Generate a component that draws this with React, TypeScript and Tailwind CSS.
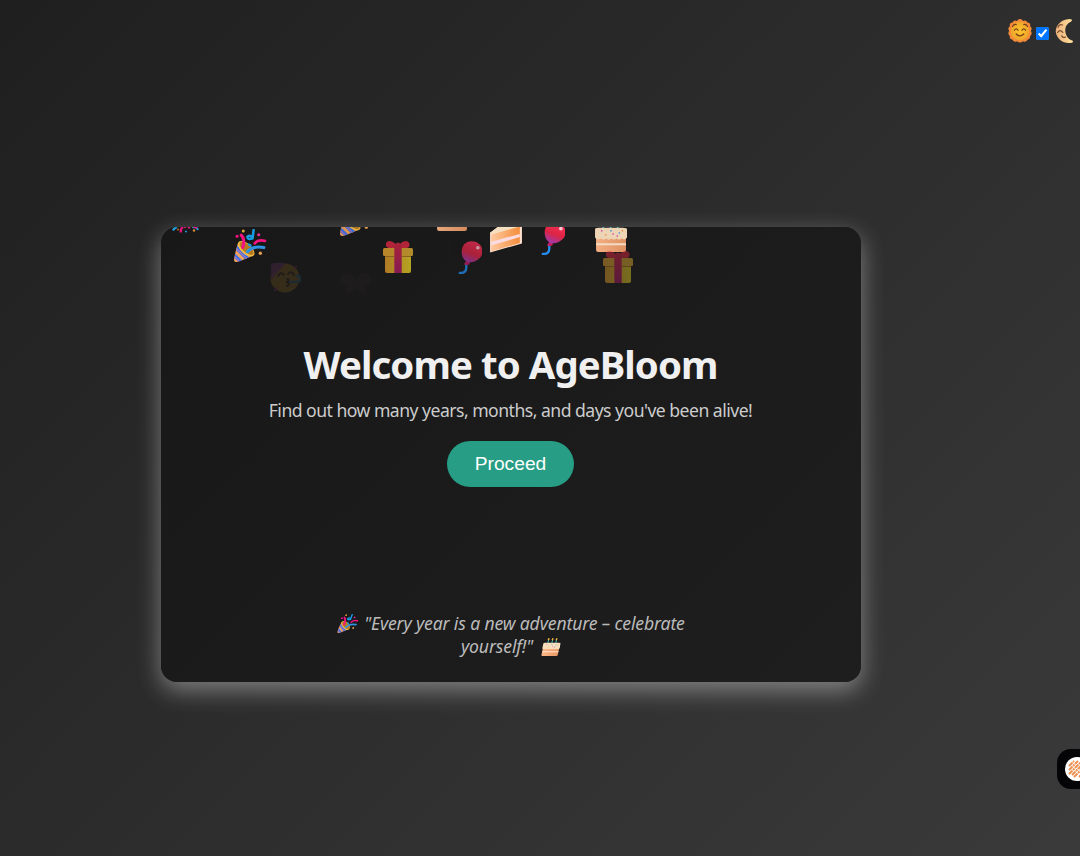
import type { ReactNode } from "react";

type GlyphProps = { className?: string };

function Glyph({ className = "", children }: GlyphProps & { children: ReactNode }) {
  return (
    <svg viewBox="0 0 32 32" fill="none" className={className} aria-hidden="true">
      {children}
    </svg>
  );
}

function Popper({ className }: GlyphProps) {
  return (
    <Glyph className={className}>
      <path d="M4 13Q1 22 0 30Q0 32 3 32Q13 29 19 25Z" fill="#f2a05a" />
      <path d="M3.4 16L14.5 27.5L10.5 29L2.2 20.5ZM1.3 24L7.8 30.4L4 31.6L0.5 28Z" fill="#3d73ef" />
      <path d="M2.6 19L12 28.5M0.9 27L5 31" stroke="#e06fa0" strokeWidth="0.9" />
      <ellipse cx="11.8" cy="19.2" rx="9.8" ry="5" transform="rotate(42 11.8 19.2)" fill="#f5bd45" />
      <ellipse cx="12.2" cy="18.8" rx="8.5" ry="3.8" transform="rotate(42 12.2 18.8)" fill="#b97a1e" />
      <path d="M7 6Q11 10 8.5 18" stroke="#f3127f" strokeWidth="3" strokeLinecap="round" />
      <path d="M13 22Q18 16 29 18" stroke="#2f93e4" strokeWidth="3" strokeLinecap="round" />
      <path d="M20 14Q23 10 30 11.5" stroke="#f3127f" strokeWidth="2.6" strokeLinecap="round" />
      <path d="M19 1L18 9Q13 11 13 7.5Q16 5 18 9M14.5 15L16 16" stroke="#179ce4" strokeWidth="2.4" strokeLinecap="round" />
      <circle cx="9" cy="2" r="1.5" fill="#dda638" /><circle cx="3" cy="7" r="1.5" fill="#f3127f" />
      <circle cx="24" cy="5.5" r="1.5" fill="#e92b9b" /><circle cx="25.5" cy="23.5" r="1.6" fill="#e9a04f" />
    </Glyph>
  );
}

function Gift({ className }: GlyphProps) {
  return (
    <Glyph className={className}>
      <path d="M15 8Q5 8 4 5Q3 0 8 0Q13 1 16 6Q19 0 24 0Q29 1 27 6Q24 8 16 8Z" fill="#e62843" />
      <rect x="3" y="11" width="26" height="21" rx="2" fill="url(#gift-box)" />
      <rect x="1" y="7" width="30" height="8" rx="1.5" fill="url(#gift-lid)" />
      <path d="M12.3 4Q16 -1 19.7 4V32H12.3Z" fill="url(#gift-ribbon)" />
      <path d="M3 15.5H12M20 15.5H29" stroke="#b27822" />
      <defs>
        <linearGradient id="gift-box"><stop stopColor="#e29b2a" /><stop offset="1" stopColor="#e8d324" /></linearGradient>
        <linearGradient id="gift-lid"><stop stopColor="#f0a930" /><stop offset="1" stopColor="#e5b333" /></linearGradient>
        <linearGradient id="gift-ribbon" x2="0" y2="1"><stop stopColor="#dc2742" /><stop offset="1" stopColor="#a91b67" /></linearGradient>
      </defs>
    </Glyph>
  );
}

function Balloon({ className }: GlyphProps) {
  return (
    <Glyph className={className}>
      <path d="M16.5 22Q18 31 12 31H10.5" stroke="#238ceb" strokeWidth="2.3" strokeLinecap="round" />
      <path d="M17 19L14.5 22.5Q17 24 20 22.5L20 19Z" fill="#c51b5e" />
      <path d="M22 0.3C28 0.3 32.5 4.5 32.5 10.3C32.5 16 26 20.8 19 20.8C14.5 19.5 12.3 15 12.3 10.3C12.3 4.5 16 0.3 22 0.3Z" fill="url(#balloon-skin)" />
      <ellipse cx="28" cy="6.5" rx="1.8" ry="1.7" fill="#ffc6d1" />
      <defs><linearGradient id="balloon-skin" x1=".8" x2=".4" y2="1"><stop stopColor="#ff315e" /><stop offset=".6" stopColor="#dc2443" /><stop offset="1" stopColor="#a338a8" /></linearGradient></defs>
    </Glyph>
  );
}

function Cake({ className }: GlyphProps) {
  return (
    <Glyph className={className}>
      <path d="M9 3V10M16 3V10M23 3V10" stroke="#35b9c4" strokeWidth="1.8" />
      <path d="M9 0Q7 4 9 4Q11 4 9 0ZM16 0Q14 4 16 4Q18 4 16 0ZM23 0Q21 4 23 4Q25 4 23 0Z" fill="#ffc33a" stroke="#ffc33a" />
      <path d="M2 15H31V30Q31 32 29 32H4Q2 32 2 30Z" fill="url(#cake-base)" />
      <path d="M2 23.5H31V25.5H2Z" fill="#ffe5cb" />
      <path d="M1 10Q1 8.5 4 8.5H28Q32 8.5 32 10V18Q30 21 27 19Q24 21 22 19Q19 21 17 19Q14 21 12 19Q9 21 7 19Q3 21 1 18Z" fill="#f8dfbd" />
      <path d="M7 11L8 12M18 15L19 14M22 17L23 16" stroke="#e64db1" strokeWidth="1.4" /><path d="M16 11L17 12M24 14L25 13" stroke="#4b9ae2" strokeWidth="1.4" /><path d="M27 12L28 11M11 16L12 15" stroke="#ef9b47" strokeWidth="1.4" />
      <defs><linearGradient id="cake-base"><stop stopColor="#ffb788" /><stop offset="1" stopColor="#e99866" /></linearGradient></defs>
    </Glyph>
  );
}

function CakeSlice({ className }: GlyphProps) {
  return (
    <Glyph className={className}>
      <path d="M1 13L17 1L31 3V23L1 31.5Z" fill="#ffe0ce" />
      <path d="M2 14L29 6.5V22.5L2 30.5Z" fill="url(#slice-inside)" />
      <path d="M2 21.5L29 14V17L2 25Z" fill="#fbdbe0" />
      <path d="M1 13L17 1L31 3L29 7L2 14.5Z" fill="#f4e0c0" />
      <defs><linearGradient id="slice-inside"><stop stopColor="#ffc9a0" /><stop offset="1" stopColor="#f48e3d" /></linearGradient></defs>
    </Glyph>
  );
}

function PartyFace({ className }: GlyphProps) {
  return (
    <Glyph className={className}>
      <circle cx="16" cy="16" r="14.5" fill="#dd9821" />
      <path d="M2 3Q2 1 5 1H17L2 18Z" fill="#9a42ac" />
      <path d="M2 8L10 1M2 15L15 2" stroke="#c74e91" strokeWidth="2" />
      <path d="M9 14Q12 9 15 13M19 12Q22 8 25 13M18 17Q22 18 18 20Q22 22 18 24" stroke="#50281b" strokeWidth="2" strokeLinecap="round" />
      <path d="M20 20H28Q32 20 31 16Q30 12 27 15" stroke="#338ebe" strokeWidth="2.4" />
      <path d="M25 6L28 4M5 29L8 26" stroke="#c33b95" strokeWidth="2" />
    </Glyph>
  );
}

function ConfettiBurst({ className }: GlyphProps) {
  return (
    <Glyph className={className}>
      <path d="M3 28.5Q4 26 7 25M22 25Q27 25 28 28" stroke="#229bd8" strokeWidth="2.2" />
      <path d="M11 30.5Q10 27 13 25M23 24L27 26" stroke="#e0147b" strokeWidth="2.3" />
      <circle cx="8" cy="27.5" r="1.1" fill="#b46b22" /><circle cx="16" cy="29.5" r="1.1" fill="#248bc0" /><circle cx="24" cy="28.5" r="1.2" fill="#d88c37" />
      <circle cx="15" cy="25" r="1.3" fill="#bf195f" /><circle cx="19" cy="25.5" r="1.2" fill="#e11a85" />
    </Glyph>
  );
}

function Ribbon({ className }: GlyphProps) {
  return (
    <Glyph className={className}>
      <path d="M1 12Q1 4 8 3Q14 4 16 10Q18 4 24 3Q31 4 31 12L25 16Q27 23 23 23L16 18L10 23Q5 23 7 16Z" fill="#805b4b" />
    </Glyph>
  );
}

function Sun() {
  return (
    <Glyph className="size-6">
      <path d="M16 0Q19 0 20 2.5Q24 .5 26 4.5Q30.5 5 29.5 9.5Q33 12 30.5 16Q33 20 29.5 22.5Q30 27 26 27.5Q24 31.5 20 29.5Q16 33 12 29.5Q8 31.5 6 27.5Q1.500 27 2.500 22.500Q-1 20 1.500 16Q-1 12 2.500 9.500Q1.500 5 6 4.500Q8 .500 12 2.500Q13 0 16 0Z" fill="#f28a3a" />
      <circle cx="16" cy="16" r="12.3" fill="url(#sun-face)" />
      <path d="M6 10Q8 6.500 11 7.500M21 7.500Q24 6.500 26 10M8.500 15Q11 11.500 13.500 15M18.500 15Q21 11.500 23.500 15M11 20Q16 25 21 20" stroke="#754218" strokeWidth="1.7" strokeLinecap="round" />
      <defs><radialGradient id="sun-face"><stop stopColor="#ffc52d" /><stop offset="1" stopColor="#eda52b" /></radialGradient></defs>
    </Glyph>
  );
}

function Moon() {
  return (
    <Glyph className="-ml-1 size-6 shrink-0">
      <path d="M23 0C12 1 5 8 5 17C6 26 14 32 22 32Q28 32 28 30Q28 28 25 28C18 24 16 15 19 9Q21 5 26 3Q28 0 23 0Z" fill="url(#moon-face)" />
      <path d="M8 11Q10 6 14 8M7.500 18Q11 13 14.500 18M13 22.500Q15 26 18 24" stroke="#805035" strokeWidth="1.7" strokeLinecap="round" />
      <defs><linearGradient id="moon-face"><stop stopColor="#ecb17a" /><stop offset="1" stopColor="#ffe19c" /></linearGradient></defs>
    </Glyph>
  );
}

function ThemeSwitch() {
  return (
    <label className="absolute left-[1007.5px] top-[19px] flex h-6 items-center">
      <Sun />
      <input type="checkbox" defaultChecked aria-label="Dark theme" className="ml-[4.5px] mr-[7px] mt-1 size-[13px]" />
      <Moon />
    </label>
  );
}

export default function App() {
  return (
    <div className="relative h-[856px] w-full overflow-hidden bg-[linear-gradient(135deg,#1f1f1f,#3a3a3a)] pl-[161px] pt-[227px] font-['Noto_Sans','Open_Sans',sans-serif]">
      <ThemeSwitch />
      <main className="relative h-[455px] w-[700px] rounded-[16px] bg-[linear-gradient(135deg,#181818,#1e1e1e)] shadow-[0_8px_25px_rgba(255,255,255,0.4)]">
        <div className="absolute inset-0 overflow-hidden rounded-[16px]" aria-hidden="true">
          <ConfettiBurst className="absolute left-[9px] top-[-25px] size-8" />
          <Popper className="absolute left-[73px] top-[2px] size-[33px]" />
          <PartyFace className="absolute left-[108px] top-[35px] size-8 opacity-15" />
          <Popper className="absolute left-[179px] top-[-24px] size-[33px] opacity-90" />
          <Ribbon className="absolute left-[178px] top-[43px] size-[33px] opacity-[0.04]" />
          <Gift className="absolute left-[221px] top-[14px] size-8 opacity-75" />
          <Cake className="absolute left-[274px] top-[-29px] size-[33px] opacity-90" />
          <Balloon className="absolute left-[288px] top-[14px] size-[33px] opacity-75" />
          <CakeSlice className="absolute left-[328px] top-[-8px] size-[34px]" />
          <Balloon className="absolute left-[371px] top-[-5px] size-[33px]" />
          <Cake className="absolute left-[433px] top-[-8px] size-[33px] opacity-95" />
          <Gift className="absolute left-[441px] top-[24px] size-8 opacity-45" />
        </div>
        <div className="relative flex flex-col items-center pt-[110px] pr-px">
          <h1 className="whitespace-nowrap text-[38.4px] leading-[54px] font-bold tracking-[-0.93px] text-[#f0f0f0]">Welcome to AgeBloom</h1>
          <p className="mt-[7px] whitespace-nowrap text-[17.6px] leading-6 tracking-[-0.52px] text-[#ccc]">Find out how many years, months, and days you've been alive!</p>
          <button className="mt-[19px] h-[46px] w-[127px] rounded-full bg-[#269d84] font-['Liberation_Sans',sans-serif] text-[19.2px] text-white">Proceed</button>
          <footer className="mt-[125px] flex flex-col items-center text-[17.6px] leading-[23px] tracking-[-0.14px] whitespace-nowrap text-[#bbb] italic">
            <div className="flex items-center pl-[3px]">
              <Popper className="mr-[6px] size-[19px] -skew-x-12" />
              <span>"Every year is a new adventure – celebrate</span>
            </div>
            <div className="flex items-center">
              <span>yourself!"</span>
              <Cake className="ml-[9px] size-[18px] -skew-x-12" />
            </div>
          </footer>
        </div>
      </main>
      <button aria-label="Open assistant" className="absolute left-[1057px] top-[749px] flex size-10 items-center rounded-[14px] bg-[#050507] pl-2">
        <svg viewBox="0 0 24 24" className="size-6 shrink-0" fill="none">
          <circle cx="12" cy="12" r="12" fill="white" />
          <g stroke="#ed9253" strokeWidth="2" strokeDasharray="5 .7 2 .7">
            <path d="M4 9L9 4M4 13L13 4M4 17L17 4M7 18L19 6M9 20L20 9M14 20L20 14" />
          </g>
        </svg>
      </button>
    </div>
  );
}
